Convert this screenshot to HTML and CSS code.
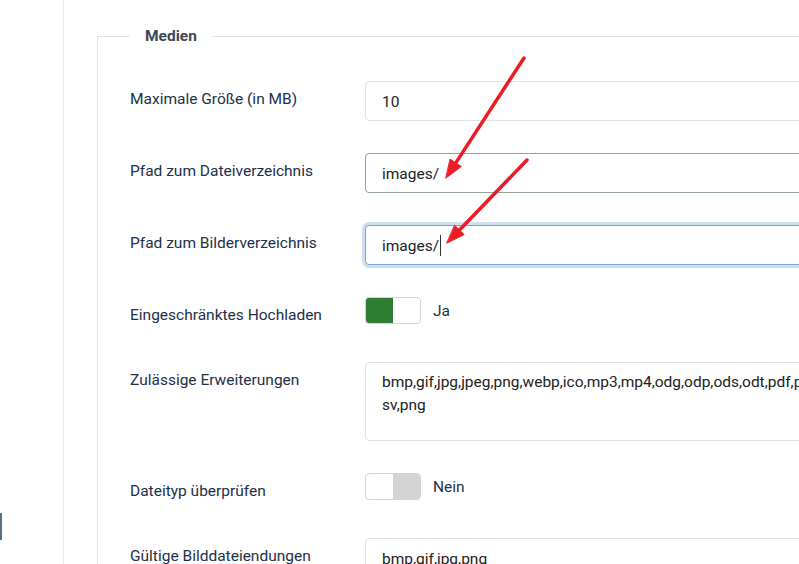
FILE: index.html
```html
<!DOCTYPE html>
<html lang="de">
<head>
    <meta charset="UTF-8">
    <meta name="viewport" content="width=device-width, initial-scale=1.0">
    <title>Medien - Optionen</title>
    <link rel="stylesheet" href="styles.css">
</head>
<body>
    <div class="page">
        <aside class="sidebar">
            <span class="sidebar-marker"></span>
        </aside>

        <main class="content">
            <fieldset class="options">
                <legend>Medien</legend>

                <div class="row">
                    <label class="row-label" for="maxSize">Maximale Größe (in MB)</label>
                    <input class="form-control" id="maxSize" type="text" value="10">
                </div>

                <div class="row">
                    <label class="row-label" for="filePath">Pfad zum Dateiverzeichnis</label>
                    <input class="form-control is-valid" id="filePath" type="text" value="images/">
                </div>

                <div class="row">
                    <label class="row-label">Pfad zum Bilderverzeichnis</label>
                    <div class="form-control is-focused">images/<span class="caret"></span></div>
                </div>

                <div class="row row-switch">
                    <label class="row-label">Eingeschränktes Hochladen</label>
                    <div class="switch">
                        <span class="switch-box on"><span></span><span></span></span>
                        <span class="switch-text">Ja</span>
                    </div>
                </div>

                <div class="row">
                    <label class="row-label">Zulässige Erweiterungen</label>
                    <div class="form-control textarea">
                        <div>bmp,gif,jpg,jpeg,png,webp,ico,mp3,mp4,odg,odp,ods,odt,pdf,png,ppt,txt,xcf,xls,c</div>
                        <div>sv,png</div>
                    </div>
                </div>

                <div class="row row-switch">
                    <label class="row-label">Dateityp überprüfen</label>
                    <div class="switch">
                        <span class="switch-box off"><span></span><span></span></span>
                        <span class="switch-text">Nein</span>
                    </div>
                </div>

                <div class="row">
                    <label class="row-label" for="imgExt">Gültige Bilddateiendungen</label>
                    <input class="form-control" id="imgExt" type="text" value="bmp,gif,jpg,png">
                </div>
            </fieldset>
        </main>
    </div>

    <!-- Markierungspfeile -->
    <svg class="arrows" width="799" height="564" viewBox="0 0 799 564">
        <g stroke="#ec1c24" stroke-width="3.5" stroke-linecap="round" fill="#ec1c24">
            <line x1="524" y1="58" x2="455.8" y2="162.9"/>
            <polygon points="446,178 461.3,166.5 450.3,159.3" stroke-width="1"/>
            <line x1="527" y1="160" x2="459.5" y2="230"/>
            <polygon points="447,243 464.2,234.6 454.8,225.4" stroke-width="1"/>
        </g>
    </svg>
</body>
</html>
```

FILE: styles.css
```css
html, body {
    margin: 0;
    height: 100%;
    overflow: hidden;
}

body {
    font-family: 'Roboto', 'Liberation Sans', sans-serif;
    background-color: #fff;
    color: #22304a;
    position: relative;
}

.page {
    display: flex;
    height: 100%;
}

.sidebar {
    width: 63px;
    flex-shrink: 0;
    border-right: 1px solid #e6e9ed;
    position: relative;
}

.sidebar-marker {
    position: absolute;
    left: 0;
    top: 513px;
    width: 2px;
    height: 27px;
    background-color: #5a6d8c;
}

.content {
    padding-left: 33px;
}

.options {
    width: 900px;
    margin: 26px 0 0;
    padding: 35px 32px 0;
    border: 1px solid #dfe3e8;
    border-right: none;
    border-bottom: none;
    min-inline-size: auto;
}

.options legend {
    padding: 0 15px;
    font-size: 15.5px;
    font-weight: bold;
    line-height: 20px;
    color: #3e4652;
}

.row {
    display: grid;
    grid-template-columns: 235px 1fr;
    align-items: start;
    margin-bottom: 32px;
}

.row-label {
    font-size: 15.5px;
    line-height: 22px;
    padding: 7px 0 4px;
}

.form-control {
    box-sizing: border-box;
    height: 40px;
    width: 100%;
    padding: 1px 16px 0;
    border: 1px solid #dde2e7;
    border-radius: 4px;
    font-family: inherit;
    font-size: 15.5px;
    color: #222;
    background-color: #fff;
    outline: none;
}

.form-control.is-valid {
    border-color: #93a293;
}

.form-control.is-focused {
    display: flex;
    align-items: center;
    border-color: #7ba3d8;
    box-shadow: 0 0 0 3px rgba(120, 160, 220, 0.35);
}

.caret {
    display: inline-block;
    width: 1px;
    height: 21px;
    margin-left: 1px;
    background-color: #333;
}

.form-control.textarea {
    height: 79px;
    padding-top: 8px;
    line-height: 23px;
    white-space: nowrap;
    overflow: hidden;
}

.switch {
    display: flex;
    align-items: center;
    gap: 12px;
}

.switch-box {
    display: flex;
    box-sizing: border-box;
    width: 56px;
    height: 27px;
    border: 1px solid #cfd5db;
    border-radius: 4px;
    overflow: hidden;
}

.switch-box span {
    flex: 1;
}

.switch-box.on span:first-child {
    background-color: #2e7d32;
}

.switch-box.off span:last-child {
    background-color: #d4d4d4;
}

.switch-text {
    font-size: 15.5px;
    color: #22304a;
}

.arrows {
    position: absolute;
    left: 0;
    top: 0;
    pointer-events: none;
}
```
